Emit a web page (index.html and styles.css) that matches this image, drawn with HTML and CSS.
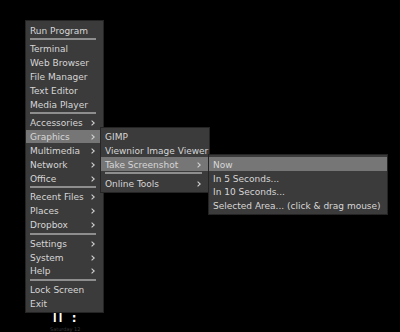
FILE: index.html
```html
<!DOCTYPE html>
<html>
<head>
<meta charset="utf-8">
<link rel="stylesheet" href="styles.css">
</head>
<body>
<div class="desktop">
  <div class="clock"><span class="digits">ll</span><span class="colon">:</span></div>
  <div class="clock-date">Saturday 12</div>
  <ul class="menu main">
    <li class="item">Run Program</li>
    <li class="sep"></li>
    <li class="item">Terminal</li>
    <li class="item">Web Browser</li>
    <li class="item">File Manager</li>
    <li class="item">Text Editor</li>
    <li class="item">Media Player</li>
    <li class="sep"></li>
    <li class="item sub"><span>Accessories</span><svg class="arrow" viewBox="0 0 4 6"><polyline points="0.6,0.6 3.2,3 0.6,5.4"/></svg></li>
    <li class="item sub active"><span>Graphics</span><svg class="arrow" viewBox="0 0 4 6"><polyline points="0.6,0.6 3.2,3 0.6,5.4"/></svg>
      <ul class="menu submenu graphics">
        <li class="item">GIMP</li>
        <li class="item">Viewnior Image Viewer</li>
        <li class="item sub active"><span>Take Screenshot</span><svg class="arrow" viewBox="0 0 4 6"><polyline points="0.6,0.6 3.2,3 0.6,5.4"/></svg>
          <ul class="menu submenu shots">
            <li class="item active">Now</li>
            <li class="item">In 5 Seconds...</li>
            <li class="item">In 10 Seconds...</li>
            <li class="item">Selected Area... (click &amp; drag mouse)</li>
          </ul>
        </li>
        <li class="sep"></li>
        <li class="item sub"><span>Online Tools</span><svg class="arrow" viewBox="0 0 4 6"><polyline points="0.6,0.6 3.2,3 0.6,5.4"/></svg></li>
      </ul>
    </li>
    <li class="item sub"><span>Multimedia</span><svg class="arrow" viewBox="0 0 4 6"><polyline points="0.6,0.6 3.2,3 0.6,5.4"/></svg></li>
    <li class="item sub"><span>Network</span><svg class="arrow" viewBox="0 0 4 6"><polyline points="0.6,0.6 3.2,3 0.6,5.4"/></svg></li>
    <li class="item sub"><span>Office</span><svg class="arrow" viewBox="0 0 4 6"><polyline points="0.6,0.6 3.2,3 0.6,5.4"/></svg></li>
    <li class="sep"></li>
    <li class="item sub"><span>Recent Files</span><svg class="arrow" viewBox="0 0 4 6"><polyline points="0.6,0.6 3.2,3 0.6,5.4"/></svg></li>
    <li class="item sub"><span>Places</span><svg class="arrow" viewBox="0 0 4 6"><polyline points="0.6,0.6 3.2,3 0.6,5.4"/></svg></li>
    <li class="item sub"><span>Dropbox</span><svg class="arrow" viewBox="0 0 4 6"><polyline points="0.6,0.6 3.2,3 0.6,5.4"/></svg></li>
    <li class="sep"></li>
    <li class="item sub"><span>Settings</span><svg class="arrow" viewBox="0 0 4 6"><polyline points="0.6,0.6 3.2,3 0.6,5.4"/></svg></li>
    <li class="item sub"><span>System</span><svg class="arrow" viewBox="0 0 4 6"><polyline points="0.6,0.6 3.2,3 0.6,5.4"/></svg></li>
    <li class="item sub"><span>Help</span><svg class="arrow" viewBox="0 0 4 6"><polyline points="0.6,0.6 3.2,3 0.6,5.4"/></svg></li>
    <li class="sep"></li>
    <li class="item">Lock Screen</li>
    <li class="item">Exit</li>
  </ul>
</div>
</body>
</html>
```
FILE: styles.css
```css
* { box-sizing: border-box; }
html, body { margin: 0; padding: 0; }
body {
  background: #000;
  width: 400px;
  height: 332px;
  overflow: hidden;
  font-family: "DejaVu Sans", sans-serif;
  font-size: 9px;
  color: #d6d6d6;
}
.desktop {
  position: relative;
  height: 332px;
  padding: 20px 0 0 25px;
}
.clock {
  position: absolute;
  left: 52px;
  top: 309px;
  display: flex;
  align-items: baseline;
  color: #fff;
  line-height: 12px;
}
.digits {
  font-size: 20px;
  letter-spacing: 0.3px;
}
.colon {
  font-size: 12px;
  font-weight: bold;
  margin-left: 8px;
}
.clock-date {
  position: absolute;
  left: 50px;
  top: 326px;
  font-size: 5px;
  line-height: 6px;
  color: #3a3a3a;
}
.menu {
  list-style: none;
  margin: 0;
  padding: 2px 0;
  background: #3b3b3b;
  border: 1px solid #242424;
}
.main {
  width: 79px;
  position: relative;
  z-index: 1;
}
.item {
  height: 13.8px;
  line-height: 12px;
  padding: 1.6px 8px 0 4px;
  display: flex;
  align-items: center;
  justify-content: space-between;
  white-space: nowrap;
}
.item.sub { position: relative; }
.item.active { background: #767676; }
.sep {
  height: 5px;
  padding: 0 7px 0 4px;
  display: flex;
  align-items: center;
}
.sep::after {
  content: "";
  flex: 1;
  height: 2px;
  background: #8e8e8e;
}
.arrow {
  width: 4px;
  height: 6px;
  flex: none;
  fill: none;
  stroke: #d0d0d0;
  stroke-width: 1.1;
}
.submenu {
  position: absolute;
  top: -3px;
  z-index: 1;
}
.graphics {
  left: 74px;
  width: 110px;
}
.shots {
  left: 107px;
  width: 180px;
}
```
